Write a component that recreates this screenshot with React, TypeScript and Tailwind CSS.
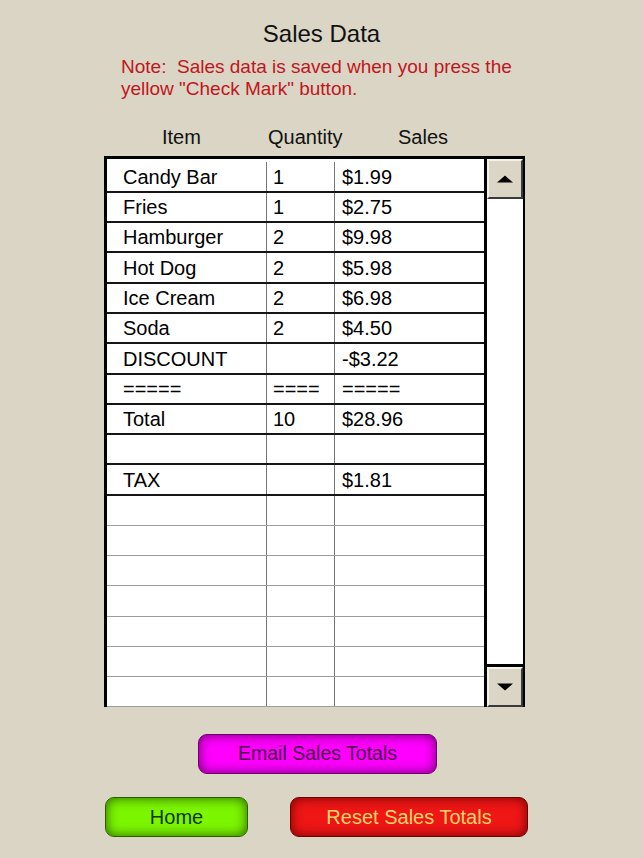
import React from "react";

type Row = { item: string; qty: string; sales: string };

const rows: Row[] = [
  { item: "Candy Bar", qty: "1", sales: "$1.99" },
  { item: "Fries", qty: "1", sales: "$2.75" },
  { item: "Hamburger", qty: "2", sales: "$9.98" },
  { item: "Hot Dog", qty: "2", sales: "$5.98" },
  { item: "Ice Cream", qty: "2", sales: "$6.98" },
  { item: "Soda", qty: "2", sales: "$4.50" },
  { item: "DISCOUNT", qty: "", sales: "-$3.22" },
  { item: "=====", qty: "====", sales: "=====" },
  { item: "Total", qty: "10", sales: "$28.96" },
  { item: "", qty: "", sales: "" },
  { item: "TAX", qty: "", sales: "$1.81" },
  { item: "", qty: "", sales: "" },
  { item: "", qty: "", sales: "" },
  { item: "", qty: "", sales: "" },
  { item: "", qty: "", sales: "" },
  { item: "", qty: "", sales: "" },
  { item: "", qty: "", sales: "" },
  { item: "", qty: "", sales: "" },
];

const heights = [
  "h-[34px] pt-[3px]",
  "h-[30px]",
  "h-[30px]",
  "h-[31px]",
  "h-[30px]",
  "h-[30px]",
  "h-[31px]",
  "h-[30px]",
  "h-[30px]",
  "h-[30px]",
  "h-[31px]",
  "h-[30px]",
  "h-[30px]",
  "h-[30px]",
  "h-[31px]",
  "h-[30px]",
  "h-[30px]",
  "h-[30px]",
];

function Arrow({ up }: { up: boolean }) {
  return (
    <svg width="18" height="8" viewBox="0 0 18 8">
      {up ? (
        <polygon points="1,7.5 17,7.5 9,0.5" fill="#000" />
      ) : (
        <polygon points="1,0.5 17,0.5 9,7.5" fill="#000" />
      )}
    </svg>
  );
}

function ScrollButton({ up }: { up: boolean }) {
  return (
    <div className="flex h-[40px] items-center justify-center border-2 border-t-[#f3f1e9] border-l-[#f3f1e9] border-b-[#3a3a3a] border-r-[#3a3a3a] bg-[#dad5c4]">
      <Arrow up={up} />
    </div>
  );
}

export default function App() {
  return (
    <div className="min-h-[858px] w-[643px] bg-[#dad5c4] font-['Liberation_Sans',Arial,sans-serif] text-black">
      <div className="pt-[19px] text-center text-[24px] leading-[30px] text-[#111]">
        Sales Data
      </div>
      <div className="mt-[7px] pl-[121px] text-[19px] leading-[22px] text-[#c0161e]">
        Note:&nbsp; Sales data is saved when you press the
        <br />
        yellow "Check Mark" button.
      </div>
      <div className="mt-[25px] flex text-[20px] leading-[24px] text-[#111]">
        <div className="w-[266px] pl-[162px]">Item</div>
        <div className="w-[132px] pl-[2px]">Quantity</div>
        <div>Sales</div>
      </div>
      <div className="ml-[104px] mt-[7px] flex w-[421px] border-l-[3px] border-t-[3px] border-black">
        <div className="flex w-[377px] flex-col bg-white text-[20px] leading-[24px]">
          {rows.map((r, i) => {
            const dataRow = i <= 10;
            return (
              <div
                key={i}
                className={`flex ${heights[i]} ${
                  dataRow
                    ? "border-b-2 border-[#151515]"
                    : "border-b border-[#9c9c9c]"
                }`}
              >
                <div className="flex w-[160px] items-center border-r border-[#777] pl-[16px]">
                  {r.item}
                </div>
                <div className="flex w-[68px] items-center border-r border-[#777] pl-[6px]">
                  {r.qty}
                </div>
                <div className="flex flex-1 items-center pl-[7px]">{r.sales}</div>
              </div>
            );
          })}
        </div>
        <div className="flex w-[41px] flex-col border-l-[3px] border-r-2 border-black">
          <ScrollButton up={true} />
          <div className="flex-1 border-b-[3px] border-black bg-white" />
          <ScrollButton up={false} />
        </div>
      </div>
      <div className="ml-[198px] mt-[27px] flex h-[40px] w-[239px] items-center justify-center rounded-[9px] border border-[#6a006a] bg-[#ff00ff] text-[19.5px] text-[#4a0a4a] shadow-[inset_0_0_12px_rgba(90,0,90,0.9)]">
        Email Sales Totals
      </div>
      <div className="mt-[23px] flex">
        <div className="ml-[105px] flex h-[40px] w-[143px] items-center justify-center rounded-[9px] border border-[#2a5e00] bg-[#7cf500] text-[20px] text-[#0e3606] shadow-[inset_0_0_12px_rgba(30,80,0,0.9)]">
          Home
        </div>
        <div className="ml-[42px] flex h-[40px] w-[238px] items-center justify-center rounded-[9px] border border-[#6a0404] bg-[#ef1616] text-[20px] text-[#ffd56a] shadow-[inset_0_0_12px_rgba(100,0,0,0.9)]">
          Reset Sales Totals
        </div>
      </div>
    </div>
  );
}
